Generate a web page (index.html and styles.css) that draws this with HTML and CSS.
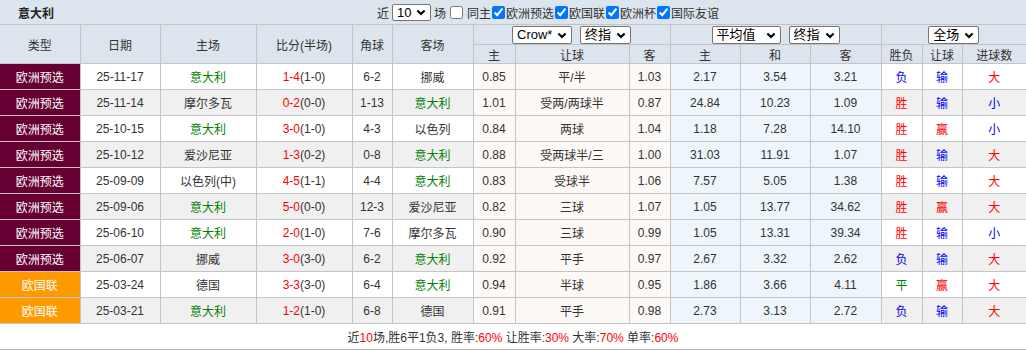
FILE: index.html
```html
<!DOCTYPE html>
<html lang="zh">
<head>
<meta charset="utf-8">
<title>意大利</title>
<link rel="stylesheet" href="styles.css">
</head>
<body>
<div class="topbar">
  <div class="title">意大利</div>
  <div class="filters">
    <span class="lbl">近</span>
    <span class="dd"><select class="sel sel-n"><option>10</option></select><svg class="chev" width="10" height="7" viewBox="0 0 10 7"><path d="M1.4 1.4 L5 5 L8.6 1.4" fill="none" stroke="#000" stroke-width="2.1"/></svg></span>
    <span class="lbl">场</span>
    <input type="checkbox" class="cb cb-off"><span>同主</span><input type="checkbox" class="cb" checked><span>欧洲预选</span><input type="checkbox" class="cb" checked><span>欧国联</span><input type="checkbox" class="cb" checked><span>欧洲杯</span><input type="checkbox" class="cb" checked><span>国际友谊</span>
  </div>
</div>
<table class="grid">
  <colgroup>
    <col style="width:80px"><col style="width:80px"><col style="width:96px"><col style="width:96px"><col style="width:40px"><col style="width:81px">
    <col style="width:42px"><col style="width:114px"><col style="width:41px">
    <col style="width:70px"><col style="width:70px"><col style="width:71px">
    <col style="width:41px"><col style="width:40px"><col style="width:64px">
  </colgroup>
  <thead>
    <tr class="h1">
      <th rowspan="2">类型</th><th rowspan="2">日期</th><th rowspan="2">主场</th><th rowspan="2">比分(半场)</th><th rowspan="2">角球</th><th rowspan="2">客场</th>
      <th colspan="3"><div class="selrow">
        <span class="dd"><select class="sel s-crow"><option>Crow*</option></select><svg class="chev" width="10" height="7" viewBox="0 0 10 7"><path d="M1.4 1.4 L5 5 L8.6 1.4" fill="none" stroke="#000" stroke-width="2.1"/></svg></span>
        <span class="dd"><select class="sel s-zz"><option>终指</option></select><svg class="chev" width="10" height="7" viewBox="0 0 10 7"><path d="M1.4 1.4 L5 5 L8.6 1.4" fill="none" stroke="#000" stroke-width="2.1"/></svg></span>
      </div></th>
      <th colspan="3"><div class="selrow">
        <span class="dd"><select class="sel s-avg"><option>平均值</option></select><svg class="chev" width="10" height="7" viewBox="0 0 10 7"><path d="M1.4 1.4 L5 5 L8.6 1.4" fill="none" stroke="#000" stroke-width="2.1"/></svg></span>
        <span class="dd"><select class="sel s-zz"><option>终指</option></select><svg class="chev" width="10" height="7" viewBox="0 0 10 7"><path d="M1.4 1.4 L5 5 L8.6 1.4" fill="none" stroke="#000" stroke-width="2.1"/></svg></span>
      </div></th>
      <th colspan="3"><div class="selrow">
        <span class="dd"><select class="sel s-zz"><option>全场</option></select><svg class="chev" width="10" height="7" viewBox="0 0 10 7"><path d="M1.4 1.4 L5 5 L8.6 1.4" fill="none" stroke="#000" stroke-width="2.1"/></svg></span>
      </div></th>
    </tr>
    <tr class="h2">
      <th>主</th><th>让球</th><th>客</th><th>主</th><th>和</th><th>客</th><th>胜负</th><th>让球</th><th>进球数</th>
    </tr>
  </thead>
  <tbody>
    <tr>
      <td class="type wq">欧洲预选</td><td>25-11-17</td><td class="ita">意大利</td><td><span class="sc">1-4</span>(1-0)</td><td>6-2</td><td>挪威</td>
      <td class="cw">0.85</td><td class="cw">平/半</td><td class="cw">1.03</td><td class="av">2.17</td><td class="av">3.54</td><td class="av">3.21</td>
      <td class="b">负</td><td class="b">输</td><td class="r">大</td>
    </tr>
    <tr class="alt">
      <td class="type wq">欧洲预选</td><td>25-11-14</td><td>摩尔多瓦</td><td><span class="sc">0-2</span>(0-0)</td><td>1-13</td><td class="ita">意大利</td>
      <td class="cw">1.01</td><td class="cw">受两/两球半</td><td class="cw">0.87</td><td class="av">24.84</td><td class="av">10.23</td><td class="av">1.09</td>
      <td class="r">胜</td><td class="b">输</td><td class="b">小</td>
    </tr>
    <tr>
      <td class="type wq">欧洲预选</td><td>25-10-15</td><td class="ita">意大利</td><td><span class="sc">3-0</span>(1-0)</td><td>4-3</td><td>以色列</td>
      <td class="cw">0.84</td><td class="cw">两球</td><td class="cw">1.04</td><td class="av">1.18</td><td class="av">7.28</td><td class="av">14.10</td>
      <td class="r">胜</td><td class="r">赢</td><td class="b">小</td>
    </tr>
    <tr class="alt">
      <td class="type wq">欧洲预选</td><td>25-10-12</td><td>爱沙尼亚</td><td><span class="sc">1-3</span>(0-2)</td><td>0-8</td><td class="ita">意大利</td>
      <td class="cw">0.88</td><td class="cw">受两球半/三</td><td class="cw">1.00</td><td class="av">31.03</td><td class="av">11.91</td><td class="av">1.07</td>
      <td class="r">胜</td><td class="b">输</td><td class="r">大</td>
    </tr>
    <tr>
      <td class="type wq">欧洲预选</td><td>25-09-09</td><td>以色列(中)</td><td><span class="sc">4-5</span>(1-1)</td><td>4-4</td><td class="ita">意大利</td>
      <td class="cw">0.83</td><td class="cw">受球半</td><td class="cw">1.06</td><td class="av">7.57</td><td class="av">5.05</td><td class="av">1.38</td>
      <td class="r">胜</td><td class="b">输</td><td class="r">大</td>
    </tr>
    <tr class="alt">
      <td class="type wq">欧洲预选</td><td>25-09-06</td><td class="ita">意大利</td><td><span class="sc">5-0</span>(0-0)</td><td>12-3</td><td>爱沙尼亚</td>
      <td class="cw">0.82</td><td class="cw">三球</td><td class="cw">1.07</td><td class="av">1.05</td><td class="av">13.77</td><td class="av">34.62</td>
      <td class="r">胜</td><td class="r">赢</td><td class="r">大</td>
    </tr>
    <tr>
      <td class="type wq">欧洲预选</td><td>25-06-10</td><td class="ita">意大利</td><td><span class="sc">2-0</span>(1-0)</td><td>7-6</td><td>摩尔多瓦</td>
      <td class="cw">0.90</td><td class="cw">三球</td><td class="cw">0.99</td><td class="av">1.05</td><td class="av">13.31</td><td class="av">39.34</td>
      <td class="r">胜</td><td class="b">输</td><td class="b">小</td>
    </tr>
    <tr class="alt">
      <td class="type wq">欧洲预选</td><td>25-06-07</td><td>挪威</td><td><span class="sc">3-0</span>(3-0)</td><td>6-2</td><td class="ita">意大利</td>
      <td class="cw">0.92</td><td class="cw">平手</td><td class="cw">0.97</td><td class="av">2.67</td><td class="av">3.32</td><td class="av">2.62</td>
      <td class="b">负</td><td class="b">输</td><td class="r">大</td>
    </tr>
    <tr>
      <td class="type nl">欧国联</td><td>25-03-24</td><td>德国</td><td><span class="sc">3-3</span>(3-0)</td><td>6-4</td><td class="ita">意大利</td>
      <td class="cw">0.94</td><td class="cw">半球</td><td class="cw">0.95</td><td class="av">1.86</td><td class="av">3.66</td><td class="av">4.11</td>
      <td class="g">平</td><td class="r">赢</td><td class="r">大</td>
    </tr>
    <tr class="alt">
      <td class="type nl">欧国联</td><td>25-03-21</td><td class="ita">意大利</td><td><span class="sc">1-2</span>(1-0)</td><td>6-8</td><td>德国</td>
      <td class="cw">0.91</td><td class="cw">平手</td><td class="cw">0.98</td><td class="av">2.73</td><td class="av">3.13</td><td class="av">2.72</td>
      <td class="b">负</td><td class="b">输</td><td class="r">大</td>
    </tr>
  </tbody>
</table>
<div class="summary"><span>近<span class="red">10</span>场,胜6平1负3, 胜率:<span class="red">60%</span> 让胜率:<span class="red">30%</span> 大率:<span class="red">70%</span> 单率:<span class="red">60%</span></span></div>
</body>
</html>
```
FILE: styles.css
```css
* { box-sizing: border-box; }
body {
  margin: 0;
  font-family: "Liberation Sans", "Noto Sans CJK SC", sans-serif;
  font-size: 12px;
  color: #333;
  background: #fff;
}
.topbar {
  display: flex;
  align-items: center;
  height: 24px;
  background: #dce4ed;
}
.title {
  width: 374px;
  padding-left: 18px;
  font-weight: bold;
  color: #222;
}
.filters {
  display: flex;
  align-items: center;
  color: #333;
}
.lbl { padding: 0 3px; }
.cb {
  width: 13px;
  height: 13px;
  margin: 0 1px 0 1px;
}
.cb-off { margin-right: 4px; }
.dd {
  position: relative;
  display: inline-flex;
  align-items: center;
}
.chev {
  position: absolute;
  right: 5px;
  top: 50%;
  margin-top: -3px;
  pointer-events: none;
}
.sel {
  -webkit-appearance: none;
  appearance: none;
  height: 18px;
  font-family: "Liberation Sans", "Noto Sans CJK SC", sans-serif;
  font-size: 13px;
  line-height: 16px;
  color: #000;
  background: #fff;
  border: 1px solid #767676;
  border-radius: 2px;
  padding: 0 0 0 4px;
  margin: 0;
}
.sel-n { width: 39px; height: 17px; }
.s-crow { width: 60px; }
.s-zz { width: 51px; }
.s-avg { width: 69px; }
.grid {
  width: 1026px;
  border-collapse: collapse;
  table-layout: fixed;
}
.grid th, .grid td {
  border: 1px solid #c4c4c4;
  padding: 0;
  text-align: center;
  vertical-align: middle;
  font-weight: normal;
  white-space: nowrap;
}
.grid tr > :first-child { border-left: none; }
.grid tr > :last-child { border-right: none; }
.grid thead th {
  background: #dce4ed;
  color: #333;
}
.h1 th { height: 20px; }
.h2 th { height: 19px; }
.selrow {
  display: flex;
  justify-content: center;
  align-items: center;
  gap: 8px;
}
.grid td { height: 26px; background: #fff; }
.grid tr.alt td { background: #f0f0f0; }
.grid td.cw, .grid tr.alt td.cw { background: #fdf9f6; }
.grid td.av, .grid tr.alt td.av { background: #eef6fb; }
.grid td.type { color: #fff; }
.grid td.wq, .grid tr.alt td.wq { background: #660033; }
.grid td.nl, .grid tr.alt td.nl { background: #ff9900; }
.ita { color: #007f00; }
.sc { color: #f00; }
.r { color: #f00; }
.b { color: #00f; }
.g { color: #008000; }
.summary {
  height: 26px;
  display: flex;
  align-items: center;
  justify-content: center;
  border-bottom: 1px solid #bbb;
  color: #333;
}
.red { color: #f00; }
```
